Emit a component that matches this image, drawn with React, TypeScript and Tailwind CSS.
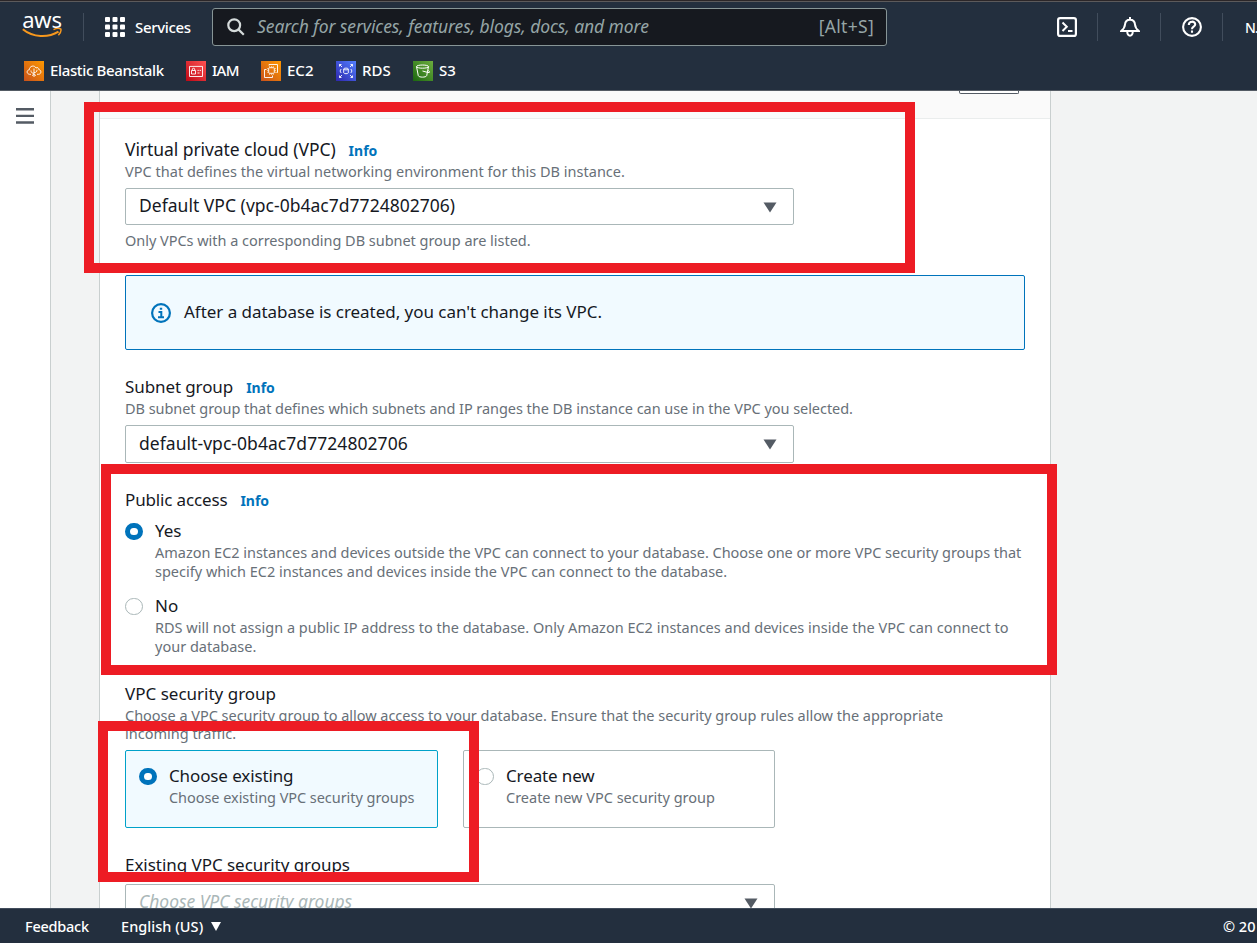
import React from "react";

function AwsLogo() {
  return (
    <div className="flex h-[28px] w-[40px] flex-col items-center">
      <span className="h-[15px] text-[22px] leading-[12px] font-normal tracking-[-0.2px] text-white">aws</span>
      <svg className="h-[10px] w-[40px]" viewBox="0 0 40 10" fill="none">
        <path d="M0.8 1.2C11 9.6 26 10 36.5 3.6" stroke="#f7981d" strokeWidth="2" />
        <path d="M31.5 1.6c3-1.4 6-1.3 7.3-.6.5 1.6-.6 4.4-2.4 6.2" stroke="#f7981d" strokeWidth="1.5" />
      </svg>
    </div>
  );
}

function BeanstalkIcon() {
  return (
    <svg className="size-5" viewBox="0 0 20 20" fill="none">
      <defs><linearGradient id="eb" x1="0" y1="1" x2="1" y2="0"><stop stopColor="#c8511b" /><stop offset="1" stopColor="#ff9900" /></linearGradient></defs>
      <rect width="20" height="20" fill="url(#eb)" />
      <g stroke="#fff" strokeWidth="0.9">
        <path d="M7 13.3H5.5C2.300 12.800 2.500 9 5.300 8.800C5.400 4.800 10.500 3.700 12 7C13.500 6 15 7 14.800 8.600C17.700 9 17.500 13 14.700 13.300H13" />
        <path d="M10 7.500V16M7 9.500c0 2 1 2.800 3 2.800M13 8.800c0 2-1 2.800-3 2.800M8 14.500l2-1 2 1" />
      </g>
    </svg>
  );
}

function IamIcon() {
  return (
    <svg className="size-5" viewBox="0 0 20 20" fill="none">
      <defs><linearGradient id="iam" x1="0" y1="1" x2="1" y2="0"><stop stopColor="#bd0816" /><stop offset="1" stopColor="#ff5252" /></linearGradient></defs>
      <rect width="20" height="20" fill="url(#iam)" />
      <g stroke="#fff" strokeWidth="0.9">
        <path d="M3.500 5.400H16.500V15.500H3.500ZM5.500 9.500H9.500V13H5.500ZM6.300 9.500V8C6.300 7 8.700 7 8.700 8V9.500M11.500 9.400H12.800M13.600 9.400H15M11.500 12H13.500" />
      </g>
    </svg>
  );
}

function Ec2Icon() {
  return (
    <svg className="size-5" viewBox="0 0 20 20" fill="none">
      <defs><linearGradient id="ec2" x1="0" y1="1" x2="1" y2="0"><stop stopColor="#c8511b" /><stop offset="1" stopColor="#ff9900" /></linearGradient></defs>
      <rect width="20" height="20" fill="url(#ec2)" />
      <g stroke="#fff" strokeWidth="0.9">
        <path d="M5.500 8.500H3.500V16.500H11.500V14.500M8 4.500V3.500H16.500V11.500H15.500" />
        <rect x="7.700" y="6.700" width="5.600" height="5.600" rx="0.800" />
        <path strokeDasharray="0.9 0.9" d="M8.200 5.800H13.200M8.200 13.200H13.200M6.800 7.200V12.200M14.200 7.200V12.200" />
      </g>
    </svg>
  );
}

function RdsIcon() {
  return (
    <svg className="size-5" viewBox="0 0 20 20" fill="none">
      <defs><linearGradient id="rds" x1="0" y1="1" x2="1" y2="0"><stop stopColor="#2e27ad" /><stop offset="1" stopColor="#527fff" /></linearGradient></defs>
      <rect width="20" height="20" fill="url(#rds)" />
      <g stroke="#fff" strokeWidth="0.9">
        <path d="M3.500 5.500V3.500H5.500M3.500 3.500L6 6M14.500 3.500H16.500V5.500M16.500 3.500L14 6M3.500 14.500V16.500H5.500M3.500 16.500L6 14M14.500 16.500H16.500V14.500M16.500 16.500L14 14" />
        <path d="M5.300 8C3.800 9.200 3.800 10.800 5.300 12M14.700 8C16.200 9.200 16.200 10.800 14.700 12" />
        <ellipse cx="10" cy="8" rx="2.300" ry="0.900" />
        <path d="M7.700 8V11.800C7.700 13 12.300 13 12.300 11.800V8" />
      </g>
    </svg>
  );
}

function S3Icon() {
  return (
    <svg className="size-5" viewBox="0 0 20 20" fill="none">
      <defs><linearGradient id="s3" x1="0" y1="1" x2="1" y2="0"><stop stopColor="#1b660f" /><stop offset="1" stopColor="#6cae3e" /></linearGradient></defs>
      <rect width="20" height="20" fill="url(#s3)" />
      <g stroke="#fff" strokeWidth="1">
        <ellipse cx="9.500" cy="5.600" rx="6" ry="1.600" />
        <path d="M3.500 5.600L5.300 14.700C6 16.600 13 16.600 13.700 14.700L15.500 5.600M9.500 10L15 11.500C17.500 12 16.800 10.300 14.800 9.300" />
      </g>
    </svg>
  );
}

const favorites = [
  { name: "Elastic Beanstalk", icon: <BeanstalkIcon />, box: "w-[162px]", text: "tracking-[-0.36px]" },
  { name: "IAM", icon: <IamIcon />, box: "w-[75px]", text: "tracking-[-0.7px]" },
  { name: "EC2", icon: <Ec2Icon />, box: "w-[75px]", text: "" },
  { name: "RDS", icon: <RdsIcon />, box: "w-[77px]", text: "" },
  { name: "S3", icon: <S3Icon />, box: "w-[75px]", text: "" },
];

function Header() {
  return (
    <header className="h-[91px] shrink-0 border-b border-[#545b64] bg-[#232f3e] text-white">
      <div className="h-[2px] border-b border-[#5c5a5b] bg-[#2b2628]" />
      <div className="flex h-[50px] items-center">
        <div className="ml-[22px] w-[61px]"><AwsLogo /></div>
        <div className="h-[28px] w-px bg-[#414d5c]" />
        <svg className="ml-[21px] size-5" viewBox="0 0 20 20" fill="#fff">
          {[0, 7.500, 15].map((y) => [0, 7.500, 15].map((x) => <rect key={`${x}-${y}`} x={x} y={y} width="5" height="5" rx="1" />))}
        </svg>
        <span className="ml-[10px] w-[77px] text-[15px] font-medium whitespace-nowrap tracking-[-0.35px]">Services</span>
        <div className="flex h-[38px] w-[675px] items-center rounded-[3px] border border-[#879596] bg-[#16191f] pr-[12px] pl-[14px] text-[17.5px] text-[#95a5a6]">
          <svg className="size-[18px]" viewBox="0 0 18 18" fill="none" stroke="#d5dbdb" strokeWidth="2.200">
            <circle cx="7.200" cy="7.200" r="5.900" /><path d="M11.400 11.400L16.800 16.800" />
          </svg>
          <span className="ml-[12px] flex-1 pb-px italic whitespace-nowrap tracking-[-0.08px]">Search for services, features, blogs, docs, and more</span>
          <span className="pb-px tracking-[0.3px]">[Alt+S]</span>
        </div>
        <svg className="ml-[170px] size-5" viewBox="0 0 20 20" fill="none" stroke="#fff" strokeWidth="2.200">
          <rect x="1.100" y="1.100" width="17.800" height="17.800" rx="2" /><path d="M5.500 5.500L9.800 9.800L5.500 14M11 14H15.500" strokeWidth="2" />
        </svg>
        <div className="ml-5 h-[28px] w-px bg-[#414d5c]" />
        <svg className="ml-[22px] size-5" viewBox="0 0 20 20" fill="none" stroke="#fff" strokeWidth="2">
          <path d="M10 0V3M1.200 14H18.800C16.300 12 15.200 10.500 15 7.500C14.800 4.500 13 2.700 10 2.700C7 2.700 5.200 4.500 5 7.500C4.800 10.500 3.700 12 1.200 14ZM7.300 14.500C7 20 13 20 12.700 14.500" />
        </svg>
        <div className="ml-5 h-[28px] w-px bg-[#414d5c]" />
        <svg className="ml-[21px] size-5" viewBox="0 0 20 20" fill="none" stroke="#fff" strokeWidth="2.100">
          <circle cx="10" cy="10" r="8.900" /><path d="M6.800 8C6.800 3.500 13.300 3.800 13.200 7.500C13.100 9.800 10 9.500 10 12.200M10 13.600V15.800" />
        </svg>
        <div className="ml-5 h-[28px] w-px bg-[#414d5c]" />
        <span className="ml-[22px] w-3 overflow-hidden text-[14px] font-medium tracking-[-0.8px] whitespace-nowrap">N.</span>
      </div>
      <nav className="flex h-[38px] items-center pl-6 text-[15px] font-medium">
        {favorites.map((f) => (
          <div key={f.name} className={`flex items-center gap-[6px] whitespace-nowrap ${f.box}`}>
            {f.icon}<span className={`pb-[2px] ${f.text}`}>{f.name}</span>
          </div>
        ))}
      </nav>
    </header>
  );
}

function Label({ children, info, text = "text-[17px]" }: { children: React.ReactNode; info?: boolean; text?: string }) {
  return (
    <div className="flex h-[22px] items-center gap-[13px] whitespace-nowrap">
      <span className={`leading-[22px] text-[#16191f] ${text}`}>{children}</span>
      {info && <a className="pt-px text-[14px] leading-[21px] font-bold text-[#0073bb]">Info</a>}
    </div>
  );
}

function Hint({ children, className = "leading-[19px]" }: { children: React.ReactNode; className?: string }) {
  return <p className={`text-[14.500px] whitespace-nowrap text-[#687078] ${className}`}>{children}</p>;
}

function Select({ children, className, text }: { children: React.ReactNode; className: string; text: string }) {
  return (
    <div className={`flex shrink-0 items-center justify-between rounded-[2px] border border-[#aab7b8] bg-white pr-4 pl-[13px] ${className}`}>
      <span className={`leading-[22px] whitespace-nowrap ${text}`}>{children}</span>
      <svg className="mt-px h-[11px] w-[14px]" viewBox="0 0 14 11"><path d="M0.500 0.500H13.500L7 10.500Z" fill="#545b64" /></svg>
    </div>
  );
}

function Radio({ on }: { on?: boolean }) {
  return on ? (
    <span className="h-[17px] w-[18px] shrink-0 rounded-full border-[5px] border-[#0073bb] bg-white" />
  ) : (
    <span className="h-[17px] w-[18px] shrink-0 rounded-full border border-[#aab7b8] bg-white" />
  );
}

type OptionLine = { text: string; track: string };

function Option({ title, lines, on, className = "", label }: { title: string; lines: OptionLine[]; on?: boolean; className?: string; label?: string }) {
  return (
    <div className={`flex gap-3 ${className}`}>
      <div className="pt-[3px]"><div className="flex h-[17px]"><Radio on={on} /></div></div>
      <div>
        <Label text={label}>{title}</Label>
        <div className="pt-px">
          {lines.map((l) => <Hint key={l.text} className={`leading-[19px] ${l.track}`}>{l.text}</Hint>)}
        </div>
      </div>
    </div>
  );
}

function Panel() {
  return (
    <section className="ml-[48px] w-[952px] shrink-0 border-x border-[#c9cfcf] bg-white">
      <div className="flex h-[28px] items-start justify-end border-b border-[#eaeded] bg-[#fafafa] pr-[31px]">
        <div className="h-[3px] w-[60px] rounded-b-[2px] border border-t-0 border-[#545b64] bg-white" />
      </div>
      <div className="flex flex-col px-[25px]">
        <div className="h-5" />
        <Label info text="pb-[2px] text-[17.5px] tracking-[-0.07px]">Virtual private cloud (VPC)</Label>
        <Hint className="mt-px leading-[19px] tracking-[0.02px]">VPC that defines the virtual networking environment for this DB instance.</Hint>
        <Select className="mt-[7px] h-[37px] w-[669px]" text="pb-[3px] text-[17.5px] tracking-[0.02px] text-[#16191f]">Default VPC (vpc-0b4ac7d7724802706)</Select>
        <Hint className="mt-[6px] leading-[19px] tracking-[-0.03px]">Only VPCs with a corresponding DB subnet group are listed.</Hint>
        <div className="mt-[25px] flex h-[75px] items-center gap-[13px] rounded-[2px] border border-[#0073bb] bg-[#f1faff] pl-[25px]">
          <svg className="size-5" viewBox="0 0 20 20" fill="none" stroke="#0073bb" strokeWidth="2.200">
            <circle cx="10" cy="10" r="8.900" /><path d="M7.500 9H10.300V14M7 14.200H13M8.800 5.800H11.200" strokeWidth="2" />
          </svg>
          <span className="pb-[2px] text-[17px] leading-[22px] tracking-[-0.04px] whitespace-nowrap text-[#16191f]">After a database is created, you can&apos;t change its VPC.</span>
        </div>
        <div className="h-[26px]" />
        <Label info text="text-[17px] tracking-[-0.1px]">Subnet group</Label>
        <Hint className="mt-px leading-[19px] tracking-[-0.048px]">DB subnet group that defines which subnets and IP ranges the DB instance can use in the VPC you selected.</Hint>
        <Select className="mt-[7px] h-[38px] w-[669px]" text="pb-[2px] text-[17.5px] tracking-[0.05px] text-[#16191f]">default-vpc-0b4ac7d7724802706</Select>
        <div className="h-[26px]" />
        <Label info text="text-[17px] tracking-[-0.15px]">Public access</Label>
        <Option
          on
          className="mt-[9px]"
          title="Yes"
          lines={[
            { text: "Amazon EC2 instances and devices outside the VPC can connect to your database. Choose one or more VPC security groups that", track: "tracking-[-0.026px]" },
            { text: "specify which EC2 instances and devices inside the VPC can connect to the database.", track: "" },
          ]}
        />
        <Option
          className="mt-[14px]"
          title="No"
          lines={[
            { text: "RDS will not assign a public IP address to the database. Only Amazon EC2 instances and devices inside the VPC can connect to", track: "" },
            { text: "your database.", track: "" },
          ]}
        />
        <div className="h-[27px]" />
        <Label>VPC security group</Label>
        <Hint className="mt-px leading-[19px] tracking-[-0.022px]">Choose a VPC security group to allow access to your database. Ensure that the security group rules allow the appropriate</Hint>
        <Hint className="-mt-px leading-[19px]">incoming traffic.</Hint>
        <div className="mt-[7px] flex gap-[25px]">
          <div className="h-[78px] w-[313px] rounded-[2px] border border-[#00a1c9] bg-[#f1faff] pt-[14px] pl-[13px]">
            <Option on title="Choose existing" label="text-[17px] tracking-[-0.12px]" lines={[{ text: "Choose existing VPC security groups", track: "tracking-[-0.05px]" }]} />
          </div>
          <div className="h-[78px] w-[312px] rounded-[2px] border border-[#aab7b8] bg-white pt-[14px] pl-[12px]">
            <Option title="Create new" label="text-[17px] tracking-[-0.12px]" lines={[{ text: "Create new VPC security group", track: "tracking-[-0.01px]" }]} />
          </div>
        </div>
        <div className="h-[26px]" />
        <Label text="text-[17px] tracking-[-0.04px]">Existing VPC security groups</Label>
        <Select className="mt-[8px] h-[37px] w-[650px]" text="pb-[3px] text-[17.5px] tracking-[-0.04px] text-[#aab7b8] italic">Choose VPC security groups</Select>
      </div>
    </section>
  );
}

export default function App() {
  return (
    <div className="relative flex h-[943px] w-[1257px] flex-col overflow-hidden bg-[#f2f3f3] font-['Noto_Sans',sans-serif]">
      <Header />
      <main className="flex h-[817px] shrink-0 overflow-hidden">
        <aside className="w-[51px] shrink-0 border-r border-[#c9cfcf] bg-white pt-[17px] pl-4">
          <svg className="h-4 w-[18px]" viewBox="0 0 18 16" fill="#545b64"><path d="M0 0h18v2.400H0zM0 6.700h18v2.400H0zM0 13.300h18v2.400H0z" /></svg>
        </aside>
        <Panel />
      </main>
      <footer className="flex h-[35px] shrink-0 items-center border-t border-[#414d5c] bg-[#232f3e] pt-px pl-[25px] text-[14.500px] font-medium whitespace-nowrap text-white">
        <span className="w-[96px] tracking-[-0.25px]">Feedback</span>
        <span className="w-[90px] tracking-[0.05px]">English (US)</span>
        <svg className="h-[9px] w-[10px]" viewBox="0 0 10 9"><path d="M0 0H10L5 9Z" fill="#fff" /></svg>
        <span className="ml-auto w-[34px] overflow-hidden">© 20</span>
      </footer>
      <div className="absolute top-[102px] left-[84px] h-[171px] w-[831px] border-[10px] border-[#ed1c24]" />
      <div className="absolute top-[464px] left-[101px] h-[211px] w-[956px] border-[10px] border-[#ed1c24]" />
      <div className="absolute top-[721px] left-[98px] h-[161px] w-[381px] border-[10px] border-[#ed1c24]" />
    </div>
  );
}
